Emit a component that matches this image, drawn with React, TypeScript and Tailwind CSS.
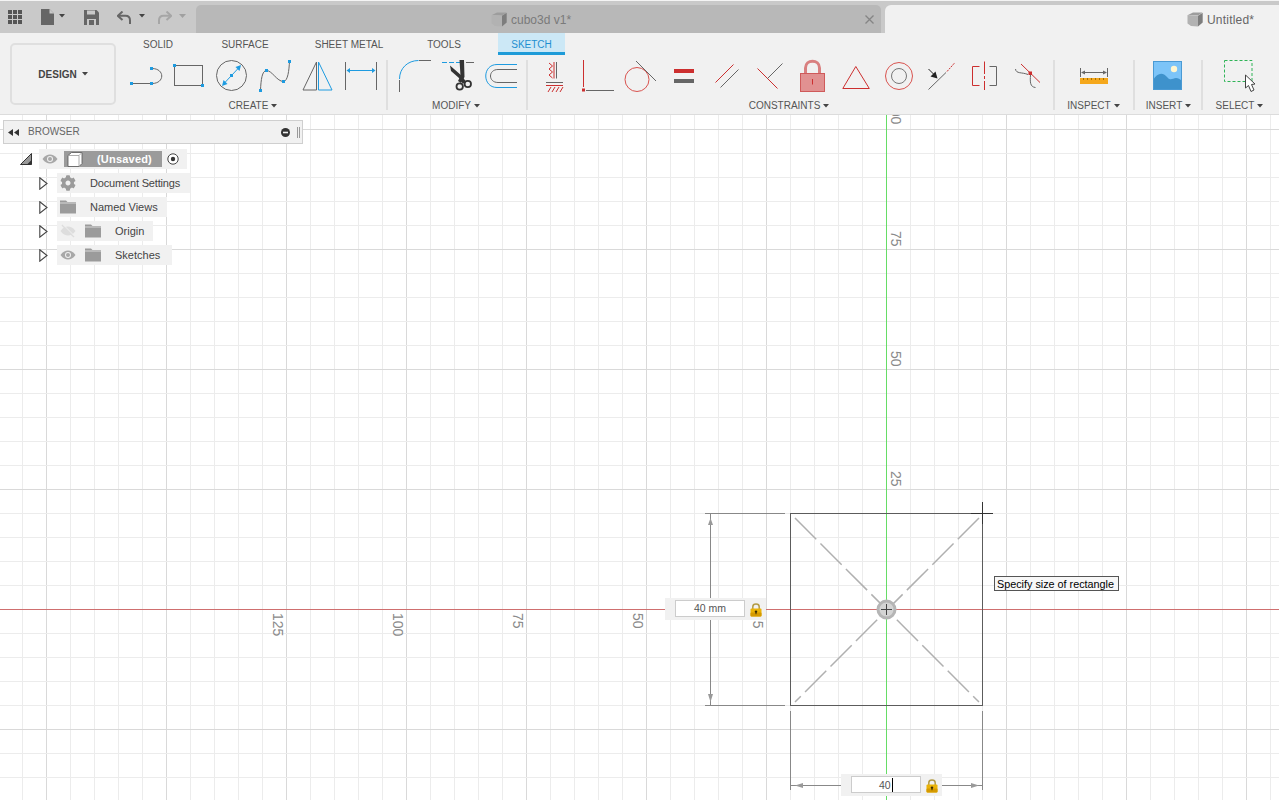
import type { ReactNode } from "react";
import { FaCog } from "react-icons/fa";

const BLUE = "#1e9be0";
const RED = "#cc2f2f";
const GRAY = "#666666";

interface IGlyphProps {
  x: number;
  y: number;
  w: number;
  h: number;
  className?: string;
  children: ReactNode;
}

// svg whose viewBox uses the coordinates of the screen, handier for tracing
const Glyph = ({ x, y, w, h, className, children }: IGlyphProps) => (
  <svg
    width={w}
    height={h}
    viewBox={`${x} ${y} ${w} ${h}`}
    fill="none"
    className={`block shrink-0 ${className ?? ""}`}
  >
    {children}
  </svg>
);

const Caret = ({ className }: { className?: string }) => (
  <svg width="6" height="4" viewBox="0 0 6 4" className={`inline-block shrink-0 ${className ?? ""}`}>
    <path d="M0 0H6L3 3.5Z" fill="#444" />
  </svg>
);

const Dot = ({ x, y }: { x: number; y: number }) => (
  <rect x={x - 1.5} y={y - 1.5} width="3" height="3" fill={BLUE} />
);

const Tool = ({ x, children }: { x: number; children: ReactNode }) => (
  <Glyph x={x} y={55} w={43} h={40}>
    {children}
  </Glyph>
);

const Separator = ({ className }: { className?: string }) => (
  <div className={`mt-[5px] h-[50px] w-[2px] bg-[#dfdfdf] shrink-0 ${className ?? ""}`} />
);

const Label = ({ text, className }: { text: string; className?: string }) => (
  <div className={`mt-[4px] h-[14px] flex items-center justify-center gap-[3px] text-[10px] leading-none text-[#555] ${className ?? ""}`}>
    {text}
    <Caret />
  </div>
);

const CubeIcon = () => (
  <svg width="16" height="15" viewBox="0 0 16 15" className="block shrink-0">
    <path d="M1 3L6 0.5H15.5L11 3.5Z" fill="#9d9d9d" />
    <path d="M0.5 3L11 3.8V14.5L4 14L0.5 11.5Z" fill="#b2b2b2" />
    <path d="M11 3.8L15.7 0.8V10.5L11 14.5Z" fill="#7d7d7d" />
  </svg>
);

const Eye = ({ color = "#a8a8a8" }: { color?: string }) => (
  <svg width="16" height="10" viewBox="0 0 16 10" className="shrink-0">
    <path d="M0.5 5C3 1.5 5.5 0.5 8 0.5S13 1.5 15.5 5C13 8.5 10.5 9.5 8 9.5S3 8.5 0.5 5Z" fill={color} />
    <circle cx="8" cy="5" r="3" fill="#f1f1f1" />
    <circle cx="8" cy="5" r="2" fill={color} />
  </svg>
);

const EyeOff = () => (
  <svg width="16" height="14" viewBox="0 0 16 14" className="shrink-0">
    <path d="M0.5 7C3 3.5 5.5 2.5 8 2.5S13 3.5 15.5 7C13 10.5 10.5 11.5 8 11.5S3 10.5 0.5 7Z" fill="#dddddd" />
    <path d="M2 1L14 13" stroke="#dddddd" strokeWidth="1.6" />
    <path d="M3.5 1L15 12.5" stroke="#f1f1f1" strokeWidth="1" />
  </svg>
);

const Folder = () => (
  <svg width="16" height="14" viewBox="0 0 16 14" className="block shrink-0">
    <path d="M0 0.5H6L7.5 2H16V13.5H0Z" fill="#9b9b9b" />
    <path d="M0 3H16" stroke="#f1f1f1" strokeWidth="0.7" />
  </svg>
);

const Expand = () => (
  <svg width="9" height="13" viewBox="0 0 9 13" className="ml-[36px] mr-[9px] shrink-0">
    <path d="M0.8 0.8L8 6.5L0.8 12.2Z" fill="#fff" stroke="#444" strokeWidth="1.1" />
  </svg>
);

const TreeRow = ({ children, className }: { children: ReactNode; className: string }) => (
  <div className="flex items-center h-[20px]">
    <Expand />
    <div className={`flex items-center h-[20px] bg-[#f1f1f1] pl-[3px] text-[11px] text-[#444] whitespace-nowrap ${className}`}>
      {children}
    </div>
  </div>
);

const Lock = () => (
  <svg width="12" height="14" viewBox="0 0 12 14" className="block shrink-0">
    <path d="M2.8 6V3.8C2.8 0.2 9.2 0.2 9.2 3.8V6" fill="none" stroke="#b39b45" strokeWidth="1.5" />
    <rect x="0.5" y="5.5" width="11" height="8" rx="1" fill="#eab308" />
    <rect x="0.5" y="9.5" width="11" height="4" rx="1" fill="#d59a00" />
    <circle cx="6" cy="8.6" r="1.2" fill="#3a2c00" />
    <rect x="5.5" y="8.6" width="1" height="2.6" fill="#3a2c00" />
  </svg>
);

const gridXs = Array.from({ length: 53 }, (_, i) => 22 + i * 24);
const gridYs = Array.from({ length: 29 }, (_, i) => 129 + i * 24);

const axisNumbers = [
  { text: "125", x: 273, y: 613 },
  { text: "100", x: 393, y: 613 },
  { text: "75", x: 513, y: 613 },
  { text: "50", x: 633, y: 613 },
  { text: "25", x: 753, y: 613 },
  { text: "100", x: 891, y: 101 },
  { text: "75", x: 891, y: 231 },
  { text: "50", x: 891, y: 351 },
  { text: "25", x: 891, y: 471 },
];

const TabBar = () => (
  <div className="h-[33px] flex bg-[#c9c9c9] border-t border-[#f4f4f4]">
    <div className="w-[196px] flex items-start shrink-0">
      <Glyph x={8} y={10} w={14} h={14} className="ml-[8px] mt-[9px]">
        {[10, 15, 20].map((y) =>
          [8, 13, 18].map((x) => <rect key={`${x}-${y}`} x={x} y={y} width="4" height="4" fill="#555" />)
        )}
      </Glyph>
      <svg width="13" height="16" viewBox="0 0 13 16" className="ml-[19px] mt-[8px] shrink-0">
        <path d="M0 0H8.5L13 4.5V16H0Z" fill="#666" />
        <path d="M8.5 0V4.5H13" fill="#c9c9c9" />
      </svg>
      <Caret className="ml-[5px] mt-[13px]" />
      <svg width="15" height="15" viewBox="0 0 15 15" className="ml-[19px] mt-[9px] shrink-0">
        <path d="M0 0H12.5L15 2.5V15H0Z" fill="#666" />
        <rect x="3" y="0.5" width="8" height="4" fill="#c9c9c9" />
        <rect x="3" y="9" width="9" height="6" fill="#c9c9c9" />
        <rect x="5" y="10" width="5" height="5" fill="#666" />
      </svg>
      <svg width="14" height="13" viewBox="0 0 14 13" className="ml-[18px] mt-[10px] shrink-0">
        <path d="M5.5 0.5L0.8 4.8L5.5 9" fill="none" stroke="#666" strokeWidth="2" />
        <path d="M1.5 4.8H8.5C11.5 4.8 13 7 13 9.5V13" fill="none" stroke="#666" strokeWidth="2" />
      </svg>
      <Caret className="ml-[8px] mt-[13px]" />
      <svg width="14" height="13" viewBox="0 0 14 13" className="ml-[13px] mt-[10px] shrink-0">
        <path d="M8.5 0.5L13.2 4.8L8.5 9" fill="none" stroke="#a6a6a6" strokeWidth="2" />
        <path d="M12.5 4.8H5.5C2.5 4.8 1 7 1 9.5V13" fill="none" stroke="#a6a6a6" strokeWidth="2" />
      </svg>
      <svg width="7" height="4" viewBox="0 0 7 4" className="ml-[7px] mt-[13px] shrink-0">
        <path d="M0 0H7L3.5 4Z" fill="#a0a0a0" />
      </svg>
    </div>
    <div className="mt-[4px] w-[685px] h-[28px] rounded-t-[5px] bg-[#b8b8b8] flex items-center pl-[295px] pr-[6px] pt-[1px] text-[12px] text-[#7a7a7a]">
      <CubeIcon />
      <span className="ml-[4px]">cubo3d v1*</span>
      <svg width="9" height="9" viewBox="0 0 9 9" className="ml-auto mr-[1px]">
        <path d="M0.5 0.5L8.5 8.5M8.5 0.5L0.5 8.5" stroke="#858585" strokeWidth="1.3" />
      </svg>
    </div>
    <div className="mt-[4px] ml-[4px] flex-1 h-[28px] rounded-tl-[6px] bg-[#f1f1f1] flex items-center pl-[302px] pt-[1px] text-[12px] tracking-[0.2px] text-[#666]">
      <CubeIcon />
      <span className="ml-[4px]">Untitled*</span>
    </div>
  </div>
);

const Ribbon = () => (
  <div className="h-[82px] flex bg-[#f1f1f1] border-b border-[#dcdcdc]">
    <div className="w-[125px] shrink-0 pl-[10px] pt-[10px]">
      <button className="w-[106px] h-[62px] border-2 border-[#dfdfdf] rounded-[5px] flex items-center justify-center gap-[5px] text-[10px] font-bold text-[#444]">
        DESIGN
        <Caret />
      </button>
    </div>
    <div className="flex flex-col">
      <div className="h-[22px] flex text-[10px] text-[#555] text-center">
        <div className="w-[66px] leading-[24px]">SOLID</div>
        <div className="w-[108px] leading-[24px]">SURFACE</div>
        <div className="w-[100px] leading-[24px]">SHEET METAL</div>
        <div className="w-[90px] leading-[24px]">TOOLS</div>
        <div className="ml-[9px] w-[67px] h-[22px] leading-[24px] bg-[#cce8f6] border-b-[3px] border-[#1e9bd8] text-[#1e8fd0]">
          SKETCH
        </div>
      </div>
      <div className="flex">
        <div className="w-[258px] shrink-0">
          <div className="flex">
            <Tool x={125}>
              <path d="M131 83.5H152M152 68.5C165 68.5 165 83.5 152 83.5" stroke={GRAY} />
              <Dot x={131.5} y={83.5} />
              <Dot x={151.5} y={83.5} />
              <Dot x={151.5} y={68.5} />
            </Tool>
            <Tool x={168}>
              <rect x="174.5" y="65.5" width="28" height="20" stroke={GRAY} />
              <Dot x={174.5} y={65.5} />
              <Dot x={202.5} y={85.5} />
            </Tool>
            <Tool x={211}>
              <circle cx="231.5" cy="75.5" r="15" stroke={GRAY} />
              <path d="M224 83.5L239 67.5" stroke={BLUE} />
              <path d="M222 86L223.5 80L227.5 84ZM241 65L239.5 71L235.5 67Z" fill={BLUE} />
              <Dot x={231.5} y={75.5} />
            </Tool>
            <Tool x={254}>
              <path d="M260.5 90C261 80 262 70.5 266.5 70.5C272 70.5 277 81.5 283.5 81.5C288 81 289 70 289.5 61.5" stroke={GRAY} />
              <Dot x={260.5} y={90.5} />
              <Dot x={266.5} y={70.5} />
              <Dot x={283.5} y={81.5} />
              <Dot x={289.5} y={61.5} />
            </Tool>
            <Tool x={297}>
              <path d="M316.5 62L303 90H316.5Z" stroke={GRAY} />
              <path d="M318.5 62L332 90H318.5Z" stroke={BLUE} />
            </Tool>
            <Tool x={340}>
              <path d="M345.5 62V90M376.5 62V90" stroke={GRAY} />
              <path d="M349 70.5H373" stroke={BLUE} />
              <path d="M346.5 70.5L350 68V73ZM375.5 70.5L372 68V73Z" fill={BLUE} />
            </Tool>
          </div>
          <Label text="CREATE" className="pr-[2px]" />
        </div>
        <Separator className="ml-[3px]" />
        <div className="w-[129px] ml-[6px] shrink-0">
          <div className="flex">
            <Tool x={394}>
              <path d="M399.5 79C399.5 68 408 60.5 418.5 60.5" stroke={BLUE} />
              <path d="M419 60.5H431M399.5 80V92" stroke={GRAY} />
            </Tool>
            <Tool x={437}>
              <path d="M442 62.5H461" stroke={BLUE} strokeDasharray="5 2" />
              <path d="M466 62.5H474" stroke={GRAY} />
              <path d="M459.5 60H464L464.5 77L461 83L458 81L460.5 76Z" fill="#333" />
              <path d="M450 65.5L462 76L465.5 81L463 84L459 78L451 71Z" fill="#333" />
              <circle cx="459.7" cy="86.5" r="3.2" stroke="#333" strokeWidth="1.8" />
              <circle cx="467.8" cy="84" r="3.2" stroke="#333" strokeWidth="1.8" />
            </Tool>
            <Tool x={480}>
              <path d="M517 64.5H497C482 64.5 482 87.5 497 87.5H517" stroke={BLUE} />
              <path d="M517 69.5H498C488 69.5 488 82.5 498 82.5H517" stroke={GRAY} />
            </Tool>
          </div>
          <Label text="MODIFY" className="pr-[5px]" />
        </div>
        <Separator className="ml-[3px]" />
        <div className="w-[516px] ml-[5px] shrink-0">
          <div className="flex">
            <Tool x={533}>
              <path d="M556.5 62V78.5M546 82.5H563" stroke={GRAY} />
              <path d="M554 62V78.5M546 85.5H563" stroke={RED} />
              <path d="M549 63L552.5 66L549 69L552.5 72L549 75L552.5 78M548 92L551 87M552 92L555 87M556 92L559 87M560 92L563 87" stroke={RED} />
            </Tool>
            <Tool x={576}>
              <path d="M583.5 60V87" stroke={RED} />
              <rect x="582" y="88.5" width="3" height="3" fill={RED} />
              <path d="M586 90.5H614" stroke={GRAY} />
            </Tool>
            <Tool x={619}>
              <circle cx="637" cy="79.5" r="12" stroke="#d9534f" />
              <path d="M636 61L656 81" stroke={GRAY} />
            </Tool>
            <Tool x={662}>
              <rect x="674" y="69" width="20" height="4" fill={RED} />
              <rect x="674" y="79" width="20" height="4" fill={GRAY} />
            </Tool>
            <Tool x={705}>
              <path d="M715.5 82.5L733.5 64.5" stroke={RED} />
              <path d="M720.5 87.5L738.5 69.5" stroke={GRAY} />
            </Tool>
            <Tool x={748}>
              <path d="M757.5 68.5L777.5 88.5" stroke={RED} />
              <path d="M767.5 78.5L782.5 63.5" stroke={GRAY} />
            </Tool>
            <Tool x={791}>
              <path d="M805.5 74V68C805.5 59 819.5 59 819.5 68V74" stroke="#d98080" strokeWidth="3" />
              <rect x="800.5" y="73.5" width="24" height="18" fill="#e19191" stroke="#cf5a5a" />
              <path d="M812.5 79V84.5" stroke={RED} />
            </Tool>
            <Tool x={834}>
              <path d="M855.8 66.5L842.8 88.5H869.3Z" stroke={RED} />
            </Tool>
            <Tool x={877}>
              <circle cx="899" cy="76" r="13.5" stroke="#d9534f" />
              <circle cx="899" cy="76" r="7.5" stroke="#777" />
            </Tool>
            <Tool x={920}>
              <path d="M928.5 89.5L946 72.5" stroke={GRAY} />
              <path d="M947 71.5L955 62.5" stroke={RED} strokeDasharray="2 1" />
              <path d="M928.5 69L934 74.5" stroke="#222" />
              <path d="M937.5 78.5L930.5 76.5L935.5 71.5Z" fill="#222" />
            </Tool>
            <Tool x={963}>
              <path d="M984.5 61.5V74M984.5 76V79M984.5 81V90" stroke={RED} />
              <path d="M979.5 66.5H972.5V85.5H979.5" stroke={RED} />
              <path d="M989.5 66.5H996.5V85.5H989.5" stroke={GRAY} />
            </Tool>
            <Tool x={1006}>
              <path d="M1021 64L1040 82.5" stroke={RED} />
              <path d="M1015.5 69C1016 74 1022 72 1028 74.5M1030.5 75C1030 82 1030 87 1035.5 87.5" stroke={GRAY} />
              <rect x="1028.5" y="71.5" width="3.5" height="3.5" fill={RED} />
            </Tool>
          </div>
          <Label text="CONSTRAINTS" className="pr-[4px]" />
        </div>
        <Separator className="ml-[4px]" />
        <div className="w-[78px] shrink-0">
          <Glyph x={1055} y={55} w={78} h={40}>
            <path d="M1080.5 68V77M1107.5 68V77M1084 72.5H1104" stroke={GRAY} />
            <path d="M1081 72.5L1085 70.5V74.5ZM1107 72.5L1103 70.5V74.5Z" fill={GRAY} />
            <rect x="1080" y="78" width="28" height="6" fill="#f5a81c" />
            <path d="M1083.5 78V80M1087.5 78V80M1091.5 78V80M1095.5 78V80M1099.5 78V80M1103.5 78V80" stroke="#a86f00" />
          </Glyph>
          <Label text="INSPECT" className="pr-[1px]" />
        </div>
        <Separator />
        <div className="w-[66px] shrink-0">
          <Glyph x={1135} y={55} w={66} h={40}>
            <rect x="1153" y="61" width="29" height="29" fill="#7cc4f8" />
            <circle cx="1174" cy="69" r="3.2" fill="#fff6cf" />
            <path d="M1153 80C1158 72 1163 72 1168 78C1171 81 1173 78 1176 78C1178 78 1180 79 1182 81V90H1153Z" fill="#3e92cc" />
            <rect x="1153.5" y="61.5" width="28" height="28" stroke="#4a9ad4" />
          </Glyph>
          <Label text="INSERT" className="pl-[1px]" />
        </div>
        <Separator />
        <div className="w-[72px] shrink-0">
          <Glyph x={1203} y={55} w={72} h={40}>
            <rect x="1224.5" y="60.5" width="27.5" height="21" stroke="#2fb457" strokeDasharray="3 2" />
            <path d="M1245.5 75V88L1248.5 85.5L1251 91.5L1254 90L1251.5 84.5L1255 84Z" fill="#fff" stroke="#444" />
          </Glyph>
          <Label text="SELECT" className="pl-[1px]" />
        </div>
      </div>
    </div>
  </div>
);

const BrowserPanel = () => (
  <div className="absolute left-[3px] top-[5px] w-[300px]">
    <div className="h-[24px] flex items-center bg-[#f1f1f1] border border-[#cfcfcf] text-[10px] leading-[20px] text-[#666]">
      <svg width="11" height="7" viewBox="0 0 11 7" className="ml-[4px]">
        <path d="M5 0V7L0 3.5ZM11 0V7L6 3.5Z" fill="#333" />
      </svg>
      <span className="ml-[9px] pb-[1px]">BROWSER</span>
      <svg width="9" height="9" viewBox="0 0 9 9" className="ml-auto">
        <circle cx="4.5" cy="4.5" r="4.5" fill="#333" />
        <rect x="2" y="3.7" width="5" height="1.6" fill="#f1f1f1" />
      </svg>
      <svg width="3" height="13" viewBox="0 0 3 13" className="ml-[7px] mr-[2px]">
        <path d="M0.5 1V12M2.5 1V12" stroke="#999" />
      </svg>
    </div>
    <div className="mt-[5px] flex flex-col gap-[4px]">
      <div className="flex items-center h-[20px]">
        <svg width="12" height="12" viewBox="0 0 12 12" className="ml-[17px] mr-[7px] shrink-0">
          <path d="M0.5 11.5L11.5 0.5V11.5Z" fill="#999" stroke="#333" />
          <path d="M0.5 11.5H11.5V7L7 11.5Z" fill="#333" />
        </svg>
        <div className="flex items-center w-[148px] h-[20px] bg-[#f1f1f1] pl-[3px]">
          <Eye />
          <div className="ml-[6px] w-[98px] h-[16px] bg-[#9b9b9b] flex items-center pl-[3px]">
            <svg width="16" height="15" viewBox="0 0 16 15" className="shrink-0">
              <path d="M1 3.5L4.5 0.5H15V11.5L12 14.5H1Z" fill="#fff" stroke="#555" strokeWidth="0.8" />
              <path d="M1 3.5H12V14.5M12 3.5L15 0.5" fill="none" stroke="#999" strokeWidth="0.8" />
            </svg>
            <span className="ml-[14px] text-[11px] font-bold tracking-[0.2px] text-white whitespace-nowrap">(Unsaved)</span>
          </div>
          <svg width="12" height="12" viewBox="0 0 12 12" className="ml-[5px] shrink-0">
            <circle cx="6" cy="6" r="5.2" fill="#fff" stroke="#444" />
            <circle cx="6" cy="6" r="2.2" fill="#333" />
          </svg>
        </div>
      </div>
      <TreeRow className="pr-[10px]">
        <FaCog className="w-[16px] h-[16px] text-[#9b9b9b] shrink-0" />
        <span className="ml-[14px] tracking-[-0.17px]">Document Settings</span>
      </TreeRow>
      <TreeRow className="pr-[9px]">
        <Folder />
        <span className="ml-[14px]">Named Views</span>
      </TreeRow>
      <TreeRow className="pr-[9px]">
        <EyeOff />
        <span className="ml-[9px]"><Folder /></span>
        <span className="ml-[14px]">Origin</span>
      </TreeRow>
      <TreeRow className="pr-[12px]">
        <Eye />
        <span className="ml-[9px]"><Folder /></span>
        <span className="ml-[14px]">Sketches</span>
      </TreeRow>
    </div>
  </div>
);

const Viewport = () => (
  <svg width="1279" height="685" viewBox="0 115 1279 685" fill="none" className="block" fontFamily="'Liberation Sans', sans-serif">
    {gridXs.map((x) => (
      <path key={x} d={`M${x + 0.5} 115V800`} stroke={(x - 886) % 120 === 0 ? "#d9d9d9" : "#ececec"} />
    ))}
    {gridYs.map((y) => (
      <path key={y} d={`M0 ${y + 0.5}H1279`} stroke={(y - 609) % 120 === 0 ? "#d9d9d9" : "#ececec"} />
    ))}
    <path d="M0 609.5H1279" stroke="#cf6f6f" />
    <path d="M886.5 115V800" stroke="#66dd66" />
    {axisNumbers.map((n) => (
      <text
        key={`${n.text}-${n.x}`}
        transform={`translate(${n.x} ${n.y}) rotate(90)`}
        fontSize="14"
        fill="#8a8a8a"
      >
        {n.text}
      </text>
    ))}

    <rect x="790.5" y="513.5" width="192" height="192" stroke="#5c5c5c" />
    <path d="M795 518L979 702M979 518L795 702" stroke="#b0b0b0" strokeWidth="1.5" strokeDasharray="30 6" />
    <circle cx="886.5" cy="609.5" r="8.5" fill="#d4d4d4" stroke="#b5b5b5" strokeWidth="3" />
    <path d="M881 609.5H892M886.5 604V615" stroke="#444" />
    <path d="M971 513.5H993M982.5 502V524" stroke="#333" />

    <path d="M705 513.5H785M705 705.5H785M710.5 514V705" stroke="#888" />
    <path d="M710.5 518L708 525H713ZM710.5 702L708 694H713Z" fill="#999" />
    <path d="M790.5 711V790M982.5 711V790M791 785.5H982" stroke="#888" />
    <path d="M795 785.5L803 783V788ZM979 785.5L971 783V788Z" fill="#999" />
  </svg>
);

const DimensionBox = ({ className, children }: { className: string; children: ReactNode }) => (
  <div className={`absolute w-[101px] h-[22px] bg-[#f1f1f1] flex items-start pl-[10px] pt-[2px] ${className}`}>
    {children}
    <span className="ml-[5px] mt-[3px]">
      <Lock />
    </span>
  </div>
);

export default function App() {
  return (
    <div className="w-[1279px] h-[800px] overflow-hidden bg-white font-['Liberation_Sans',sans-serif]">
      <TabBar />
      <Ribbon />
      <div className="relative h-[685px] overflow-hidden">
        <Viewport />
        <BrowserPanel />

        <DimensionBox className="left-[665px] top-[483px]">
          <div className="w-[70px] h-[17px] bg-white border border-[#cccccc] text-center text-[10.5px] leading-[14px] text-[#555]">
            40 mm
          </div>
        </DimensionBox>
        <DimensionBox className="left-[841px] top-[659px]">
          <div className="w-[70px] h-[17px] bg-white border border-[#cccccc] flex items-center pl-[27px] text-[10.5px] leading-[14px] text-[#555]">
            40
            <span className="ml-[1px] w-px h-[14px] bg-black" />
          </div>
        </DimensionBox>

        <div className="absolute left-[994px] top-[461px] w-[125px] h-[15px] bg-[#f7f7f7] border border-[#555] text-[10.8px] leading-[14px] text-black pl-[2px] whitespace-nowrap">
          Specify size of rectangle
        </div>
      </div>
    </div>
  );
}
